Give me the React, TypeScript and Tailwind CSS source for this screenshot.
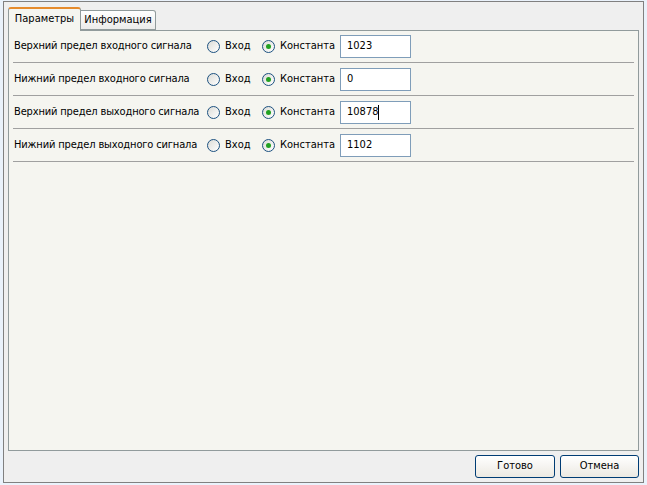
const rows = [
  { label: "Верхний предел входного сигнала", value: "1023" },
  { label: "Нижний предел входного сигнала", value: "0" },
  { label: "Верхний предел выходного сигнала", value: "10878", caret: true },
  { label: "Нижний предел выходного сигнала", value: "1102" },
];

function Radio({ checked }: { checked?: boolean }) {
  return (
    <span className="w-[13px] h-[13px] rounded-full border border-[#1c5180] bg-gradient-to-br from-[#dcdcd7] to-white flex items-center justify-center shrink-0">
      {checked && <span className="w-[5px] h-[5px] rounded-full bg-[#21a121]" />}
    </span>
  );
}

export default function App() {
  return (
    <div
      className="w-[647px] h-[485px] bg-[#eaf2fb] pl-[3px] pt-[1px] text-[11px] text-black"
      style={{ fontFamily: "Tahoma, 'DejaVu Sans Condensed', 'Liberation Sans', sans-serif" }}
    >
      <div className="w-[641px] h-[482px] border border-[#808080] bg-[#efefef] flex flex-col px-[4px] pt-[4px]">
        <div className="flex items-end h-[24px] relative z-10">
          <div className="h-[24px] w-[73px] border border-[#919b9c] border-b-0 border-t-[#e68b2c] border-t-2 rounded-t-[3px] bg-[#f5f5f0] flex items-center justify-center -mb-px pb-[1px]">
            Параметры
          </div>
          <div className="h-[20px] w-[75px] border border-[#919b9c] border-l-0 rounded-tr-[3px] bg-gradient-to-b from-white to-[#ececeb] flex items-center justify-center">
            Информация
          </div>
        </div>
        <div className="h-[421px] border border-[#919b9c] bg-[#f5f5f0] px-[4px]">
          <div className="-mt-px">
            {rows.map((r) => (
              <div key={r.label} className="h-[33px] border-b border-[#a0a0a0] flex items-center">
                <span className="w-[194px] pl-[1px] whitespace-nowrap tracking-[-0.15px]">{r.label}</span>
                <Radio />
                <span className="ml-[5px] w-[37px]">Вход</span>
                <Radio checked />
                <span className="ml-[5px] w-[60px]">Константа</span>
                <div className="w-[71px] h-[23px] border border-[#7f9db9] bg-white flex items-center pl-[6px] pt-[1px]">
                  {r.value}
                  {r.caret && <span className="w-px h-[15px] bg-black" />}
                </div>
              </div>
            ))}
          </div>
        </div>
        <div className="flex justify-end gap-[5px] pt-[4px]">
          <button className="w-[80px] h-[23px] border border-[#003c74] rounded-[3px] bg-gradient-to-b from-white to-[#ece9e2]">
            Готово
          </button>
          <button className="w-[79px] h-[23px] border border-[#003c74] rounded-[3px] bg-gradient-to-b from-white to-[#ece9e2]">
            Отмена
          </button>
        </div>
      </div>
    </div>
  );
}
